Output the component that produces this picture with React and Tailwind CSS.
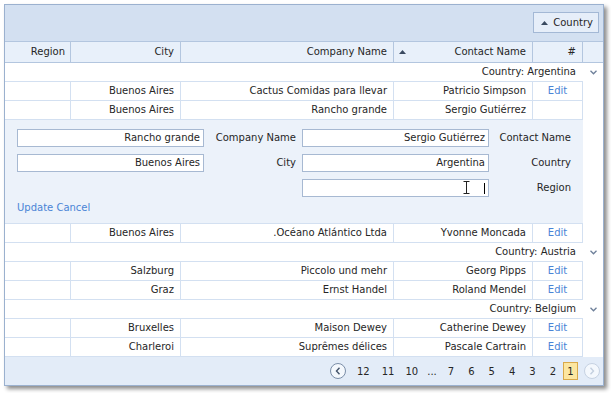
import React from 'react';

const font = { fontFamily: '"DejaVu Sans", Verdana, sans-serif' };

const groups = [
  {
    country: 'Argentina',
    rows: [
      { city: 'Buenos Aires', company: 'Cactus Comidas para llevar', contact: 'Patricio Simpson' },
      { city: 'Buenos Aires', company: 'Rancho grande', contact: 'Sergio Gutiérrez', editing: true },
      { city: 'Buenos Aires', company: '.Océano Atlántico Ltda', contact: 'Yvonne Moncada' },
    ],
  },
  {
    country: 'Austria',
    rows: [
      { city: 'Salzburg', company: 'Piccolo und mehr', contact: 'Georg Pipps' },
      { city: 'Graz', company: 'Ernst Handel', contact: 'Roland Mendel' },
    ],
  },
  {
    country: 'Belgium',
    rows: [
      { city: 'Bruxelles', company: 'Maison Dewey', contact: 'Catherine Dewey' },
      { city: 'Charleroi', company: 'Suprêmes délices', contact: 'Pascale Cartrain' },
    ],
  },
];

const Chevron = () => (
  <svg width="7" height="5" viewBox="0 0 7 5" className="text-[#6d7f99]">
    <path d="M0.5 0.8 L3.5 3.8 L6.5 0.8" fill="none" stroke="currentColor" strokeWidth="1.3" />
  </svg>
);

const SortUp = () => (
  <svg width="7" height="4" viewBox="0 0 7 4">
    <path d="M0 4 L3.5 0 L7 4 Z" fill="#3a4a60" />
  </svg>
);

const DataRow = ({ row }) => (
  <div className="flex h-[19px]">
    <div className="flex border-b border-[#d3e0f1]">
      <div className="w-[66px] border-r border-[#d3e0f1]" />
      <div className="w-[110px] border-r border-[#d3e0f1] pr-[6px] text-right leading-[18px]">{row.city}</div>
      <div className="w-[213px] border-r border-[#d3e0f1] pr-[6px] text-right leading-[18px]">{row.company}</div>
      <div className="w-[139px] border-r border-[#d3e0f1] pr-[6px] text-right leading-[18px]">{row.contact}</div>
      <div className="w-[50px] border-r border-[#d3e0f1] text-center leading-[18px] text-[#4a84d6]">
        {row.editing ? '' : 'Edit'}
      </div>
    </div>
    <div className="w-[20px]" />
  </div>
);

const Field = ({ value, children }) => (
  <div className="relative h-[18px] w-[187px] border border-[#a7b9d2] bg-white pr-[3px] text-right leading-[16px]">
    {value}
    {children}
  </div>
);

const EditForm = () => (
  <div className="flex h-[104px]">
    <div className="w-[578px] border-b border-[#d3e0f1] bg-[#ecf2fa] pl-[12px] pt-[9px]">
      <div className="grid grid-cols-[187px_98px_187px_82px] grid-rows-[18px_18px_18px] gap-y-[7px]">
        <Field value="Rancho grande" />
        <div className="pr-[6px] text-right leading-[18px]">Company Name</div>
        <Field value="Sergio Gutiérrez" />
        <div className="text-right leading-[18px]">Contact Name</div>
        <Field value="Buenos Aires" />
        <div className="pr-[6px] text-right leading-[18px]">City</div>
        <Field value="Argentina" />
        <div className="text-right leading-[18px]">Country</div>
        <div />
        <div />
        <Field value="">
          <svg width="7" height="13" viewBox="0 0 7 13" className="absolute left-[160px] top-[1px]">
            <path d="M0.5 0.5 H6.5 M3.5 1 V12 M0.5 12.5 H6.5" fill="none" stroke="#222" strokeWidth="1" />
          </svg>
          <div className="absolute left-[181px] top-[3px] h-[11px] w-px bg-black" />
        </Field>
        <div className="text-right leading-[18px]">Region</div>
      </div>
      <div className="mt-[4px] leading-[14px] text-[#4a84d6]">Update Cancel</div>
    </div>
    <div className="w-[20px] bg-white" />
  </div>
);

const GroupRow = ({ country }) => (
  <div className="flex h-[19px]">
    <div className="w-[578px] border-b border-[#d3e0f1] pr-[7px] text-right leading-[18px]">
      Country: {country}
    </div>
    <div className="flex w-[20px] items-center justify-center pb-[1px]">
      <Chevron />
    </div>
  </div>
);

const PageButton = ({ disabled, dir }) => (
  <div
    className={`flex h-[16px] w-[16px] items-center justify-center rounded-full border bg-[#f4f8fd] ${
      disabled ? 'border-[#c6d2e2]' : 'border-[#7b8ea8]'
    }`}
  >
    <svg width="6" height="8" viewBox="0 0 6 8">
      <path
        d={dir === 'left' ? 'M4.5 0.8 L1.5 4 L4.5 7.2' : 'M1.5 0.8 L4.5 4 L1.5 7.2'}
        fill="none"
        stroke={disabled ? '#c3cfdf' : '#44546b'}
        strokeWidth="1.4"
      />
    </svg>
  </div>
);

export default function App() {
  const pages = [
    { label: '12', cls: 'px-[6px]' },
    { label: '11', cls: 'px-[6px]' },
    { label: '10', cls: 'px-[5px]' },
    { label: '...', cls: 'px-[4px]' },
    { label: '7', cls: 'px-[7px]' },
    { label: '6', cls: 'px-[7px]' },
    { label: '5', cls: 'px-[7px]' },
    { label: '4', cls: 'px-[7px]' },
    { label: '3', cls: 'px-[7px]' },
    { label: '2', cls: 'px-[7px]' },
  ];
  return (
    <div className="h-[393px] w-[611px] bg-white text-[10px] text-[#262626]" style={font}>
      <div className="ml-[4px] pt-[4px]">
        <div className="w-[600px] border border-[#9bb1cf] bg-white shadow-[3px_3px_4px_rgba(0,0,0,0.45)]">
          {/* Group panel */}
          <div className="flex h-[37px] justify-end border-b border-[#b3c6df] bg-[#d3e0f1] pr-[4px] pt-[7px]">
            <div className="flex h-[21px] items-center gap-[5px] border border-[#a3b8d5] bg-[#e6eef9] pl-[7px] pr-[5px]">
              <SortUp />
              <span>Country</span>
            </div>
          </div>

          {/* Header */}
          <div className="flex h-[21px] border-b border-[#b3c6df] bg-[#e8f0fa] leading-[20px]">
            <div className="w-[66px] border-r border-[#b3c6df] pr-[5px] text-right">Region</div>
            <div className="w-[110px] border-r border-[#b3c6df] pr-[6px] text-right">City</div>
            <div className="w-[213px] border-r border-[#b3c6df] pr-[6px] text-right">Company Name</div>
            <div className="flex w-[139px] items-center justify-between border-r border-[#b3c6df] pl-[5px] pr-[6px]">
              <SortUp />
              <span>Contact Name</span>
            </div>
            <div className="w-[50px] border-r border-[#b3c6df] pr-[6px] text-right">#</div>
            <div className="w-[20px]" />
          </div>

          {/* Rows */}
          {groups.map((g) => (
            <React.Fragment key={g.country}>
              <GroupRow country={g.country} />
              {g.rows.map((r, i) => (
                <React.Fragment key={i}>
                  <DataRow row={r} />
                  {r.editing && <EditForm />}
                </React.Fragment>
              ))}
            </React.Fragment>
          ))}

          {/* Pager */}
          <div className="flex h-[28px] items-center justify-end bg-[#e3ecf8] pr-[3px]">
            <div className="mr-[5px]">
              <PageButton dir="left" />
            </div>
            {pages.map((p) => (
              <div key={p.label} className={`flex h-[18px] items-center justify-center ${p.cls}`}>
                {p.label}
              </div>
            ))}
            <div className="flex h-[18px] w-[15px] items-center justify-center border border-[#d9a94a] bg-[#fce6a0]">
              1
            </div>
            <div className="ml-[6px]">
              <PageButton dir="right" disabled />
            </div>
          </div>
        </div>
      </div>
    </div>
  );
}
